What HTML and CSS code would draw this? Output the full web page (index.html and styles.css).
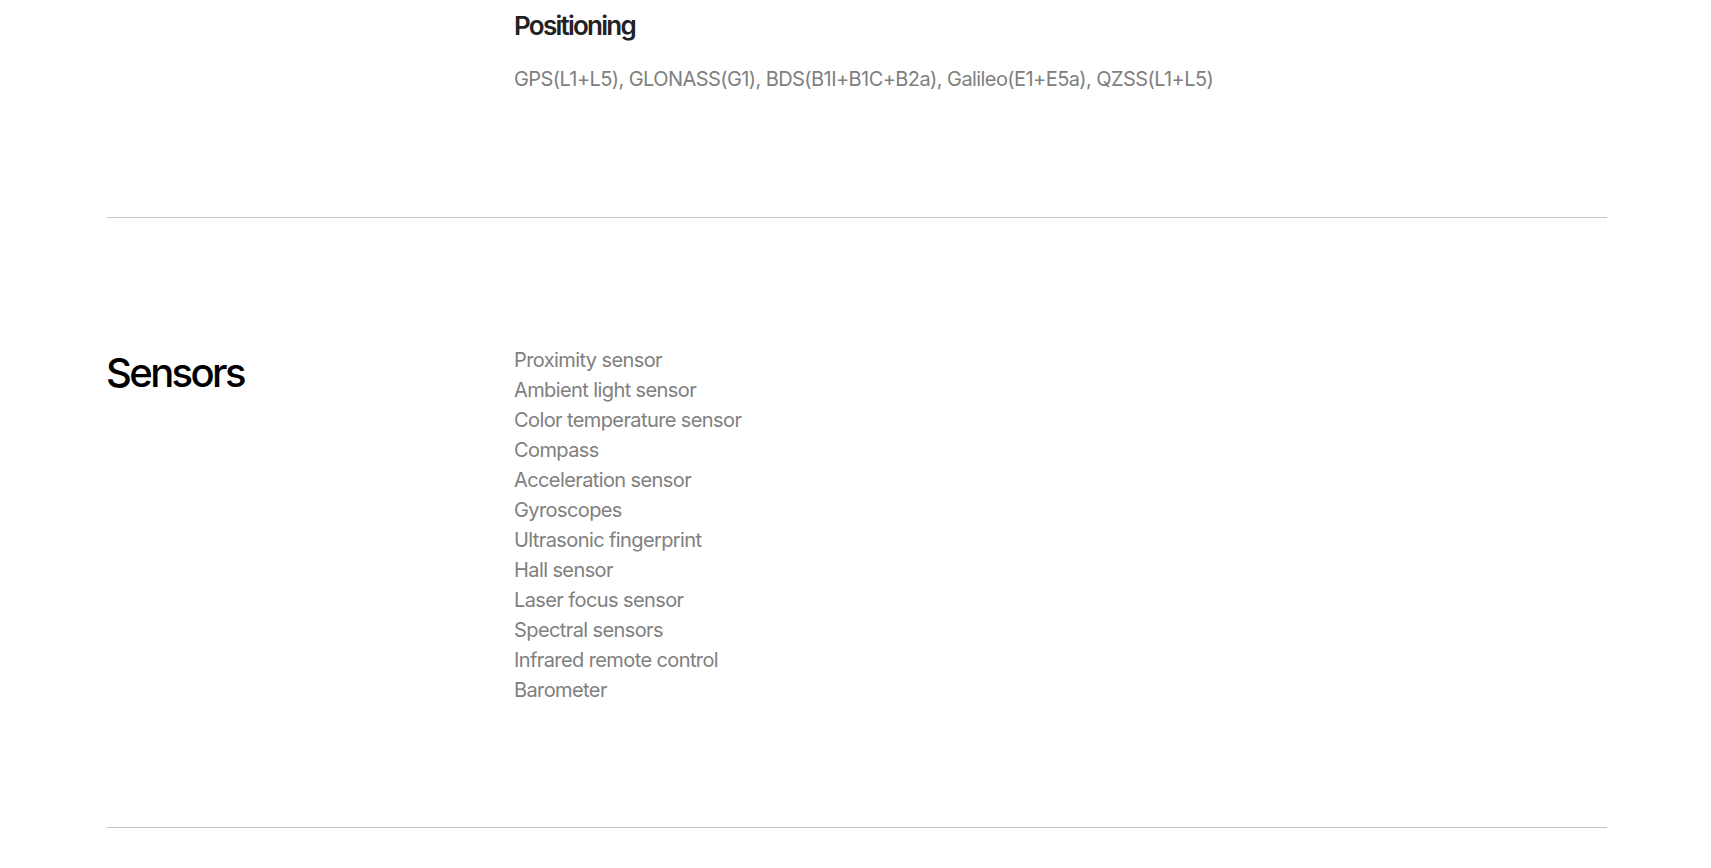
FILE: index.html
```html
<!DOCTYPE html>
<html lang="en">
<head>
<meta charset="utf-8">
<title>Specs</title>
<link rel="stylesheet" href="styles.css">
</head>
<body>
<main class="specs">
  <section class="spec-section spec-section--cut">
    <div class="spec-title"></div>
    <div class="spec-body">
      <div class="spec-item">
        <h3 class="spec-item-title">Positioning</h3>
        <p class="spec-text">GPS(L1+L5), GLONASS(G1), BDS(B1I+B1C+B2a), Galileo(E1+E5a), QZSS(L1+L5)</p>
      </div>
    </div>
  </section>
  <section class="spec-section">
    <h2 class="spec-title">Sensors</h2>
    <div class="spec-body">
      <ul class="spec-list">
        <li>Proximity sensor</li>
        <li>Ambient light sensor</li>
        <li>Color temperature sensor</li>
        <li>Compass</li>
        <li>Acceleration sensor</li>
        <li>Gyroscopes</li>
        <li>Ultrasonic fingerprint</li>
        <li>Hall sensor</li>
        <li>Laser focus sensor</li>
        <li>Spectral sensors</li>
        <li>Infrared remote control</li>
        <li>Barometer</li>
      </ul>
    </div>
  </section>
</main>
</body>
</html>
```

FILE: styles.css
```css
html, body {
  margin: 0;
  padding: 0;
  background: #ffffff;
}

body {
  font-family: Inter, "Liberation Sans", Arial, sans-serif;
  color: #000;
  -webkit-font-smoothing: antialiased;
}

.specs {
  width: 1500px;
  margin-left: 107px;
}

.spec-section {
  display: grid;
  grid-template-columns: 407px 1fr;
  border-bottom: 1px solid #c4c4c4;
  padding: 127px 0 122px;
}

.spec-section--cut {
  padding: 8px 0 123px;
}

.spec-title {
  margin: 0 0 0 -1px;
  font-size: 40px;
  font-weight: 500;
  letter-spacing: -2.6px;
  line-height: 48px;
  padding-top: 4px;
}

.spec-item-title {
  margin: 0;
  font-size: 26px;
  font-weight: 600;
  letter-spacing: -1.75px;
  line-height: 36px;
  color: #222222;
}

.spec-text {
  margin: 20px 0 0;
  font-size: 20px;
  line-height: 30px;
  letter-spacing: -0.58px;
  color: #808080;
}

.spec-list {
  list-style: none;
  margin: 0;
  padding: 0;
  font-size: 20px;
  line-height: 30px;
  letter-spacing: -0.6px;
  color: #808080;
}
```
